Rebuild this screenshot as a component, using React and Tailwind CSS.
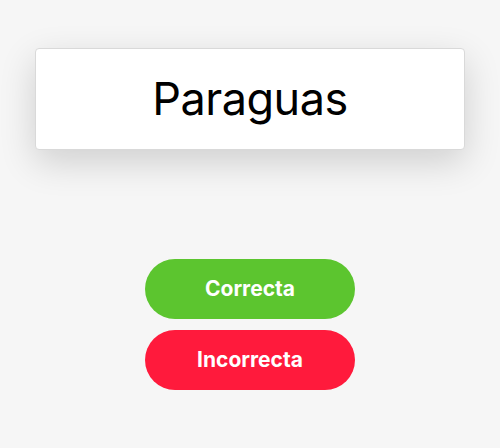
export default function App() {
  return (
    <div className="min-h-[448px] w-full bg-[#f6f6f6] pt-12" style={{ fontFamily: 'Inter, "Noto Sans", sans-serif' }}>
      <div className="mx-[35px] flex h-[102px] items-center justify-center rounded-[4px] border border-[#d9d9d9] bg-white shadow-[0_12px_36px_rgba(0,0,0,0.16)]">
        <span className="text-[45px] font-normal tracking-[-0.5px] text-black">Paraguas</span>
      </div>
      <div className="mt-[109px] flex flex-col items-center gap-[11px]">
        <button className="h-[60px] w-[210px] rounded-full bg-[#5cc52f] text-[21px] font-bold text-white">
          Correcta
        </button>
        <button className="h-[60px] w-[210px] rounded-full bg-[#ff1a3c] text-[21px] font-bold text-white">
          Incorrecta
        </button>
      </div>
    </div>
  )
}
